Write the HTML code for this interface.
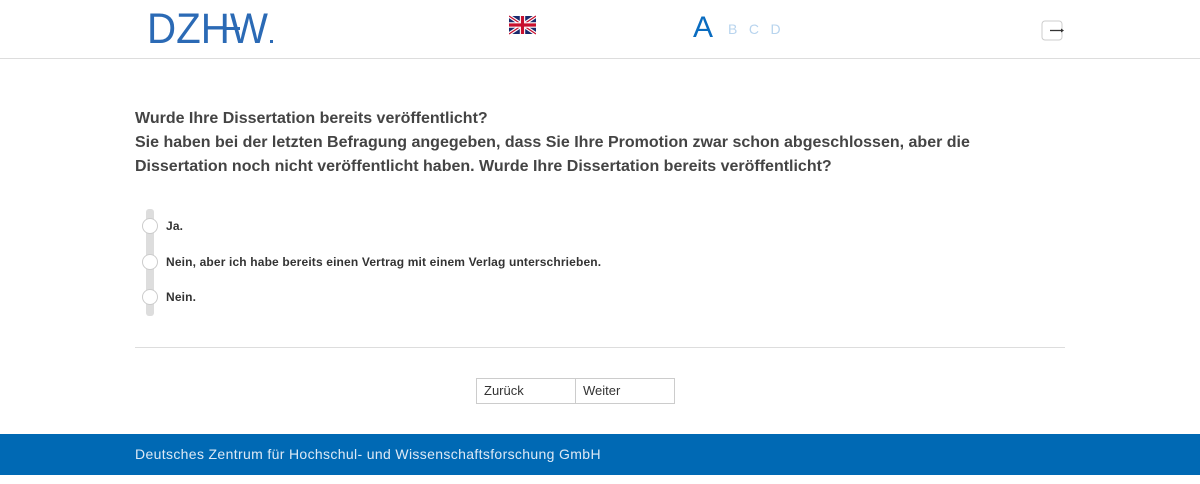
<!DOCTYPE html>
<html><head><meta charset="utf-8"><style>
*{margin:0;padding:0;box-sizing:border-box}
body{width:1200px;height:484px;background:#fff;font-family:"Liberation Sans",sans-serif;position:relative;overflow:hidden;color:#444}
.hdr{position:absolute;left:0;top:0;width:1200px;height:59px;border-bottom:1px solid #ddd}
.abc{position:absolute;left:693px;top:11px;color:#0a6cc0;font-size:30px}
.abc span{font-size:14px;color:#b8d4ee;margin-left:11.5px;vertical-align:3px}
.abc span:first-child{margin-left:15px}
.q{position:absolute;left:135px;top:107px;font-size:16px;font-weight:bold;line-height:24px;color:#444;letter-spacing:0}
.bar{position:absolute;left:146px;top:209px;width:8px;height:107px;background:#ddd;border-radius:3px}
.r{position:absolute;left:142px;width:16px;height:16px;border-radius:50%;background:#fff;border:1px solid #ccc}
.l{position:absolute;left:166px;font-size:12px;font-weight:bold;color:#333;letter-spacing:0.15px}
.hr{position:absolute;left:135px;top:347px;width:930px;height:1px;background:#ddd}
.btn{position:absolute;top:378px;height:26px;width:100px;border:1px solid #ccc;font-size:13px;color:#333;padding:4px 7px}
.ft{position:absolute;left:0;top:434px;width:1200px;height:41px;background:#0069b4;color:#dde9f5;font-size:14px;padding:12px 135px;letter-spacing:0.35px}
</style></head><body>
<div class="hdr">
<svg style="position:absolute;left:146px;top:8px" width="132" height="40">
<text x="1" y="35" font-family="Liberation Sans" font-size="43" fill="#2b6ab5" textLength="121" lengthAdjust="spacingAndGlyphs">DZHW</text>
<rect x="78" y="19" width="16" height="3" fill="#2b6ab5"/>
<rect x="124" y="32" width="3" height="3" fill="#2b6ab5"/>
</svg>
<svg style="position:absolute;left:509px;top:15px" width="27" height="20" viewBox="0 0 60 40">
<rect width="60" height="40" fill="#1a2a6c"/>
<path d="M0 0L60 40M60 0L0 40" stroke="#fff" stroke-width="8"/>
<path d="M0 0L60 40M60 0L0 40" stroke="#c8102e" stroke-width="3"/>
<path d="M30 0V40M0 20H60" stroke="#fff" stroke-width="12"/>
<path d="M30 0V40M0 20H60" stroke="#c8102e" stroke-width="7"/>
</svg>
<div class="abc">A<span>B</span><span>C</span><span>D</span></div>
<svg style="position:absolute;left:1041px;top:20px" width="25" height="22"><rect x="1" y="1" width="20" height="19" rx="3" fill="#fff" stroke="#ccc"/><path d="M9 10.5H22" stroke="#333" stroke-width="1.3"/><path d="M20 8.5L23 10.5L20 12.5Z" fill="#333"/></svg>
</div>
<div class="q">Wurde Ihre Dissertation bereits veröffentlicht?<br>Sie haben bei der letzten Befragung angegeben, dass Sie Ihre Promotion zwar schon abgeschlossen, aber die<br>Dissertation noch nicht veröffentlicht haben. Wurde Ihre Dissertation bereits veröffentlicht?</div>
<div class="bar"></div>
<div class="r" style="top:218px"></div><div class="l" style="top:219px">Ja.</div>
<div class="r" style="top:254px"></div><div class="l" style="top:255px">Nein, aber ich habe bereits einen Vertrag mit einem Verlag unterschrieben.</div>
<div class="r" style="top:289px"></div><div class="l" style="top:290px">Nein.</div>
<div class="hr"></div>
<div class="btn" style="left:476px">Zurück</div>
<div class="btn" style="left:575px">Weiter</div>
<div class="ft">Deutsches Zentrum für Hochschul- und Wissenschaftsforschung GmbH</div>
</body></html>
